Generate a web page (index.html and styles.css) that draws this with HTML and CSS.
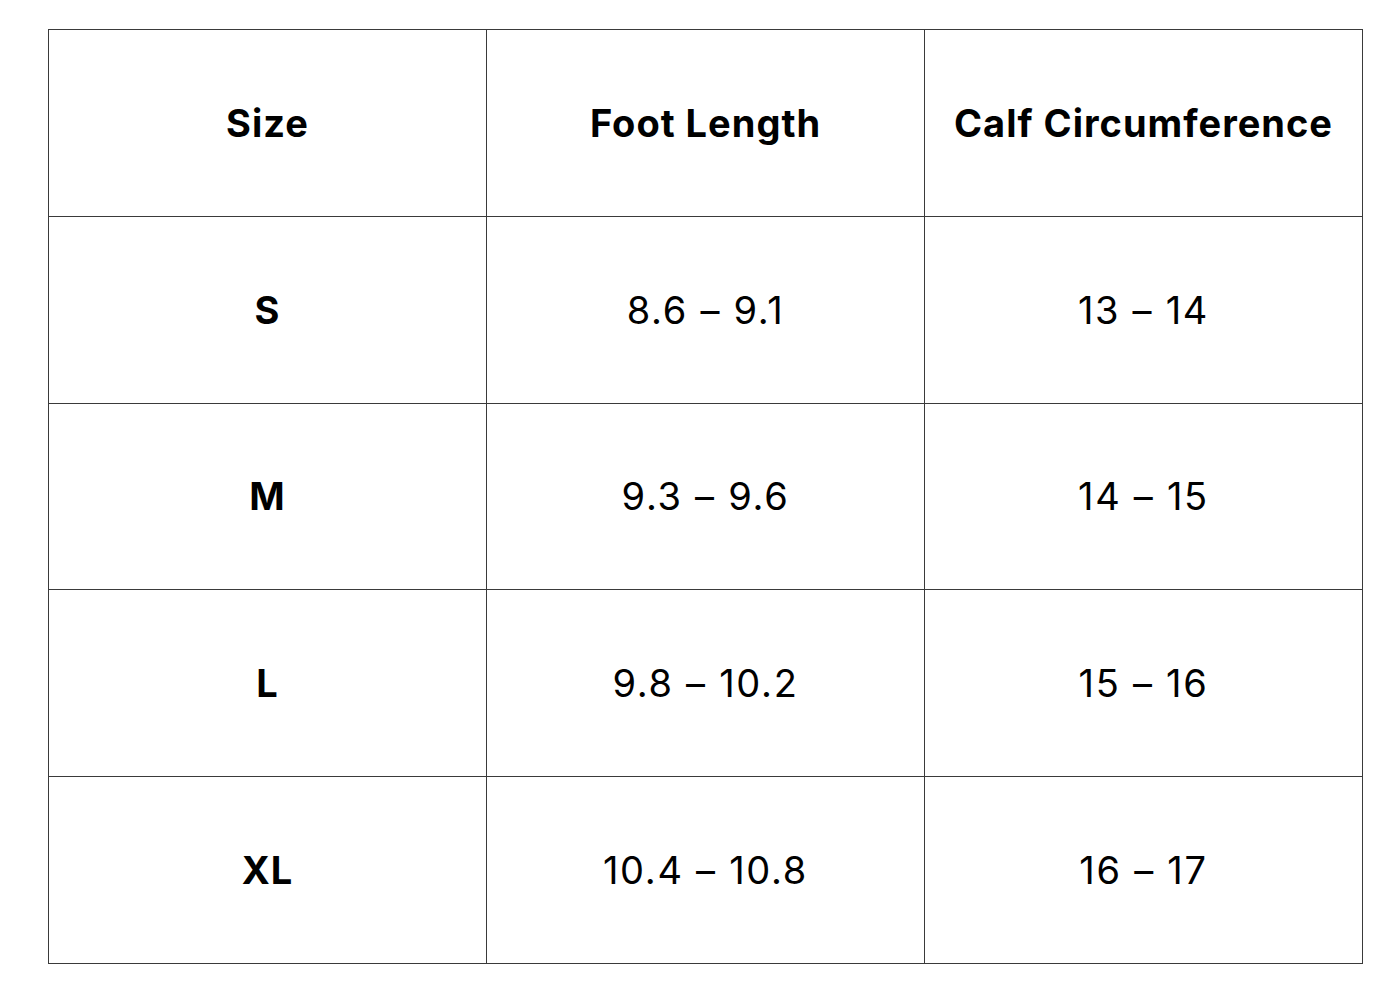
FILE: index.html
```html
<!DOCTYPE html>
<html>
<head>
<meta charset="utf-8">
<link rel="stylesheet" href="styles.css">
</head>
<body>
<table class="chart">
  <thead>
    <tr><th>Size</th><th>Foot Length</th><th>Calf Circumference</th></tr>
  </thead>
  <tbody>
    <tr><th>S</th><td>8.6 – 9.1</td><td>13 – 14</td></tr>
    <tr><th>M</th><td>9.3 – 9.6</td><td>14 – 15</td></tr>
    <tr><th>L</th><td>9.8 – 10.2</td><td>15 – 16</td></tr>
    <tr><th>XL</th><td>10.4 – 10.8</td><td>16 – 17</td></tr>
  </tbody>
</table>
</body>
</html>
```
FILE: styles.css
```css
html, body {
  margin: 0;
  background: #ffffff;
}
body {
  padding: 29px 0 0 48px;
  font-family: Inter, "Open Sans", sans-serif;
  color: #000;
}
.chart {
  border-collapse: collapse;
  table-layout: fixed;
  width: 1315px;
}
.chart th, .chart td {
  border: 1px solid #3a3a3a;
  height: 185.8px;
  padding: 0;
  text-align: center;
  vertical-align: middle;
  font-size: 38px;
  letter-spacing: 1px;
}
.chart th {
  font-weight: 700;
}
.chart td {
  font-weight: 400;
  letter-spacing: 1.7px;
}
```
